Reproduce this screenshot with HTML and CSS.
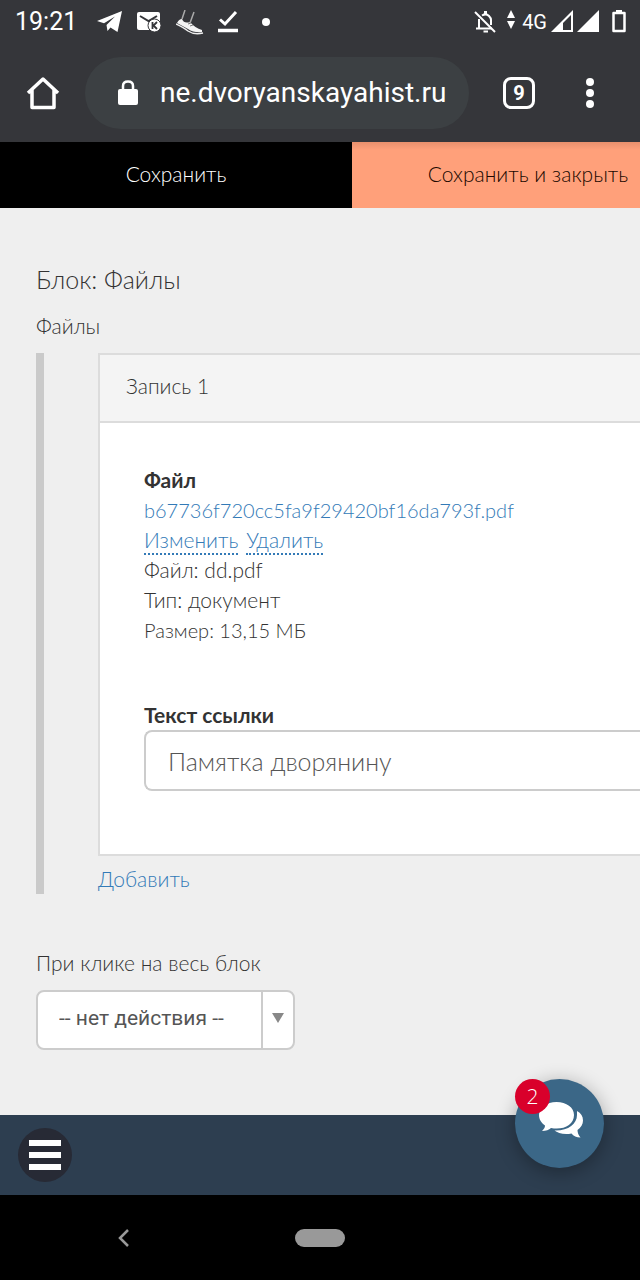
FILE: index.html
```
<!DOCTYPE html>
<html lang="ru">
<head>
<meta charset="utf-8">
<meta name="viewport" content="width=device-width, initial-scale=1">
<title>Блок: Файлы</title>
<link rel="stylesheet" href="styles.css">
</head>
<body>
<div class="screen">
  <header class="chrome">
    <div class="status">
      <span class="clock">19:21</span>
      <div class="status-left">
        <svg width="26" height="24" viewBox="0 0 26 24" fill="#fff"><path d="M0 11 25 1 20.500 22 13.500 17.500 10.500 21 9.500 15 18 6.500 7 13.200Z"/></svg>
        <svg width="25" height="24" viewBox="0 0 25 24"><path fill="#fff" d="M2 2H21Q23 2 23 4V18Q23 20 21 20H2Q0 20 0 18V4Q0 2 2 2Z"/><path d="M3 6 11.500 11 20 6" fill="none" stroke="#35363a" stroke-width="2"/><circle cx="17.500" cy="15.500" r="6.500" fill="#fff" stroke="#35363a"/><path d="M15.500 12V19M20 12 16.500 15.500 20 19" stroke="#35363a" stroke-width="1.800" fill="none"/></svg>
        <svg width="28" height="25" viewBox="0 0 28 25"><path d="M1 13 Q3 9 6 9 Q8 14 14 12 Q19 18 26 20 L26 22 Q18 23 12 19 Z" fill="#f4f4f4"/><path d="M0 14 Q8 18 12 21 Q18 25 27 23" fill="none" stroke="#eee" stroke-width="1.500"/><path d="M9 0 6 9M18 2 14 13" stroke="#aaa" stroke-width="1.500"/><path d="M12 14 15 13M14 16 17 15" stroke="#777"/></svg>
        <svg width="20" height="24" viewBox="0 0 20 24" fill="none" stroke="#fff"><path d="M2 9.500 7 14 18 2" stroke-width="3"/><path d="M0 20.500H20" stroke-width="3.500"/></svg>
        <svg width="8" height="24" viewBox="0 0 8 24"><circle cx="4" cy="12" r="4" fill="#fff"/></svg>
      </div>
      <div class="status-right">
        <svg width="22" height="24" viewBox="0 0 22 24" fill="none" stroke="#fff" stroke-width="2"><path d="M5 18V9M8 5.500Q12 3 15 6Q17 8 17 10V15M2 18.500H18"/><path d="M11.500 1V4" stroke-width="3"/><path d="M9.500 21.500H14" stroke-width="2"/><path d="M1 2 21 22"/></svg>
        <svg width="8" height="24" viewBox="0 0 8 24" fill="#fff"><path d="M0 8 4 0 8 8ZM0 11H8L4 19Z"/></svg>
        <span class="network">4G</span>
        <svg width="22" height="24" viewBox="0 0 22 24"><path d="M0 22 22 0V22Z" fill="#fff"/><path d="M12 13 20 5V20H12Z" fill="#35363a"/></svg>
        <svg width="22" height="24" viewBox="0 0 22 24"><path d="M0 22 22 0V22Z" fill="#fff"/></svg>
        <svg class="battery" width="14" height="24" viewBox="0 0 14 24"><path d="M1.500 3H12.500V21H1.500Z" fill="none" stroke="#fff" stroke-width="2.500" stroke-linejoin="round"/><path d="M4 0H10V3H4Z" fill="#fff"/></svg>
      </div>
    </div>
    <div class="toolbar">
      <button class="icon-button" type="button" aria-label="Домой"><svg width="34" height="34" viewBox="0 0 34 34" fill="none" stroke="#fff" stroke-width="3.500" stroke-linejoin="round"><path d="M2 17 17 3 32 17M6 14V31.500H28V14"/></svg></button>
      <div class="omnibox">
        <svg width="20" height="26" viewBox="0 0 20 26"><rect y="9" width="20" height="16" rx="2" fill="#fff"/><path d="M5 10V6Q5 1.500 10 1.500T15 6V10" fill="none" stroke="#fff" stroke-width="2.500"/></svg>
        <input class="address" type="text" value="ne.dvoryanskayahist.ru" aria-label="Адрес">
      </div>
      <button class="tab-count" type="button" aria-label="Вкладки">9</button>
      <button class="icon-button menu" type="button" aria-label="Меню"><svg width="8" height="30" viewBox="0 0 8 30" fill="#fff"><circle cx="4" cy="4" r="4"/><circle cx="4" cy="15" r="4"/><circle cx="4" cy="26" r="4"/></svg></button>
    </div>
  </header>

  <div class="actions">
    <button class="action save" type="button">Сохранить</button>
    <button class="action save-close" type="button">Сохранить и закрыть</button>
  </div>

  <main class="content">
    <h1 class="title">Блок: Файлы</h1>
    <h2 class="caption">Файлы</h2>
    <section class="records">
      <article class="record">
        <h3 class="record-head">Запись 1</h3>
        <div class="record-body">
          <div class="file">
            <strong>Файл</strong>
            <a class="file-name" href="#file">b67736f720cc5fa9f29420bf16da793f.pdf</a>
            <div class="file-links"><a class="dotted" href="#edit">Изменить</a><a class="dotted" href="#delete">Удалить</a></div>
            <span>Файл: dd.pdf</span>
            <span>Тип: документ</span>
            <span class="file-size">Размер: 13,15 МБ</span>
          </div>
          <label class="field-label" for="link-text">Текст ссылки</label>
          <input class="field" id="link-text" type="text" value="Памятка дворянину">
        </div>
      </article>
      <a class="add" href="#add">Добавить</a>
    </section>
    <label class="caption" for="click-action">При клике на весь блок</label>
    <div class="select-box">
      <select class="select" id="click-action"><option>-- нет действия --</option></select>
      <span class="arrow"></span>
    </div>
  </main>

  <footer class="bottom-bar">
    <button class="burger" type="button" aria-label="Меню сайта"><span></span><span></span><span></span></button>
    <button class="chat" type="button" aria-label="Сообщения">
      <svg width="44" height="37" viewBox="0 0 44 37" fill="#fff"><path d="M17.500 0C7.500 0 0 5.500 0 13c0 4.500 2.500 8 6 10.500 0 2-1 3.500-3 5.500 4 0 7-1 9-3 12 2.500 23-3 23-13C35 5.500 27.500 0 17.500 0Z"/><path d="M38 9c4 2 6 5.500 6 9.500 0 4-2 7-5.500 9.500 0 3 1 5 3 7.500-4 0-7-1.500-9-4C25 33 18.500 31 15.500 28.500 29 29 38 22 38 13Z"/></svg>
      <span class="badge">2</span>
    </button>
  </footer>
  <nav class="system-nav">
    <button class="icon-button" type="button" aria-label="Назад"><svg width="11" height="18" viewBox="0 0 11 18" fill="none" stroke="#999" stroke-width="2.500"><path d="M10 1 2 9 10 17"/></svg></button>
    <button class="home-pill" type="button" aria-label="Главный экран"></button>
  </nav>
</div>
</body>
</html>
```
FILE: styles.css
```
* { box-sizing: border-box; }
body { margin: 0; background: #efefef; color: #333; font: 300 21px/30px Lato, "Open Sans", sans-serif; }
button, input, select { margin: 0; padding: 0; border: 0; background: none; color: inherit; font: inherit; }
svg { display: block; flex: none; }
a { color: #337ab7; text-decoration: none; }
.screen { display: flex; flex-direction: column; min-height: 100vh; overflow: hidden; }

.chrome { background: #35363a; color: #fff; font-family: Roboto, sans-serif; font-weight: 400; }
.status { display: flex; align-items: center; height: 44px; padding: 0 14px 0 15px; }
.clock { width: 82px; font-size: 25px; }
.status-left { display: flex; align-items: center; gap: 14px; flex: 1; }
.status-left svg:last-child { margin-left: 10px; }
.status-right { display: flex; align-items: center; gap: 4px; }
.status-right svg:first-child { margin-right: 7px; }
.network { margin-left: 3px; font-size: 20px; }
.battery { margin-left: 9px; }
.toolbar { display: flex; align-items: center; height: 98px; padding: 0 46px 0 26px; }
.icon-button { display: flex; flex: none; }
.omnibox { display: flex; align-items: center; flex: 1; gap: 22px; min-width: 0; height: 72px; margin: 0 34px 0 25px; padding: 0 10px 0 33px; border-radius: 36px; background: #3c4043; }
.address { flex: 1; min-width: 0; font-size: 28px; line-height: 36px; }
.tab-count { flex: none; width: 32px; height: 32px; border: 3px solid #fff; border-radius: 8px; font-size: 20px; font-weight: 700; line-height: 26px; }
.menu { margin-left: 51px; }

.actions { display: grid; grid-template-columns: 55% 55%; height: 66px; }
.action { padding-bottom: 2px; }
.save { background: #000; color: #fff; }
.save-close { background: linear-gradient(#e8906d, #ffa07a 8px); color: #200800; }

.content { flex: 1; padding: 54px 0 65px 36px; }
.title { margin: 0 0 15px; font-size: 25px; font-weight: 300; line-height: 34px; }
.caption { display: block; margin: 0; font-size: 21px; font-weight: 300; line-height: 30px; }
.records { margin: 12px 0 54px; padding-left: 54px; border-left: 8px solid #cacaca; }
.record { margin: 0 -2px 8px 0; border: 2px solid #dcdcdc; background: #fff; }
.record-head { margin: 0; padding: 16px 26px 20px; border-bottom: 2px solid #dcdcdc; background: #f4f4f4; font-size: 21px; font-weight: 300; line-height: 30px; }
.record-body { padding: 42px 0 63px 44px; }
.file { display: flex; flex-direction: column; align-items: flex-start; margin-bottom: 55px; }
.file strong, .field-label { font-weight: 700; }
.file-name, .file-size { font-size: 20px; }
.file-links { display: flex; gap: 8px; }
.dotted { height: 30px; border-bottom: 2px dotted #337ab7; }
.field-label { display: block; }
.field { display: block; width: 100%; height: 61px; padding: 0 22px; border: 2px solid #ccc; border-right: 0; border-radius: 8px 0 0 8px; background: #fff; color: #555; font-size: 25px; }
.add { display: block; }
.select-box { position: relative; width: 259px; margin-top: 12px; }
.select { display: block; width: 100%; height: 60px; padding: 0 40px 4px 21px; border: 2px solid #ccc; border-radius: 8px; background: #fff; color: #555; font: 400 21px/30px Roboto, sans-serif; appearance: none; }
.arrow { position: absolute; top: 2px; right: 2px; bottom: 2px; display: grid; place-items: center; width: 32px; padding-bottom: 4px; border-left: 2px solid #ccc; pointer-events: none; }
.arrow::before { content: ""; border: 6px solid transparent; border-top: 10px solid #888; border-bottom: 0; }

.bottom-bar { display: flex; align-items: center; justify-content: space-between; height: 80px; padding: 0 36px 0 18px; background: #2d3e50; }
.burger { display: flex; flex-direction: column; align-items: center; justify-content: center; gap: 6px; width: 54px; height: 54px; border-radius: 50%; background: #272a35; }
.burger span { width: 32px; height: 6px; background: #fff; }
.chat { position: relative; display: grid; place-items: center; width: 89px; height: 89px; margin-bottom: 63px; padding: 0 0 6px 2px; border-radius: 50%; background: #3b6787; box-shadow: 0 4px 20px #0005; }
.badge { position: absolute; top: 0; left: 0; width: 35px; height: 35px; border-radius: 50%; background: #d9002b; color: #fff; font: 300 21px/35px "Open Sans", sans-serif; }
.system-nav { display: flex; align-items: center; gap: 166px; height: 85px; padding-left: 118px; background: #000; }
.home-pill { width: 50px; height: 18px; border-radius: 9px; background: #999; }
```
